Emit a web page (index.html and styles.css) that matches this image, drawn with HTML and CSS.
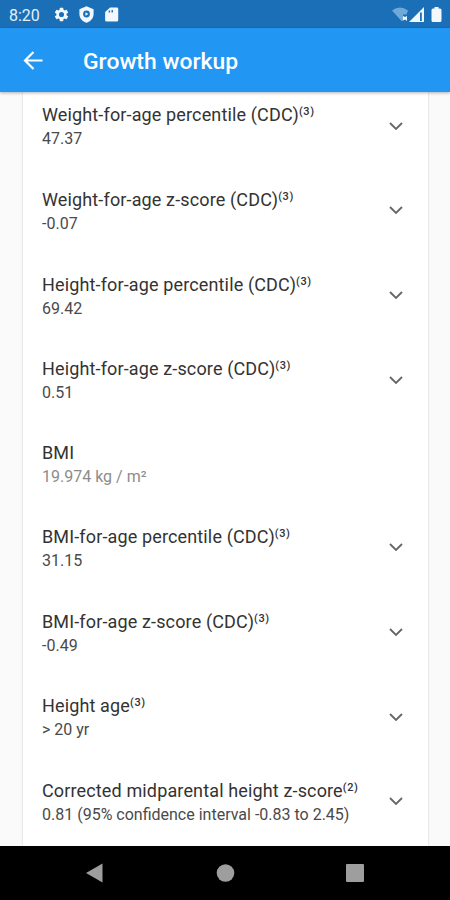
FILE: index.html
```
<!DOCTYPE html>
<html lang="en">
<head>
  <meta charset="UTF-8" />
  <meta name="viewport" content="width=device-width, initial-scale=1.0"/>
  <title>Growth workup</title>
  <link rel="stylesheet" href="styles.css">
</head>
<body>
  <div class="status-bar">
    <span class="clock">8:20</span>
    <svg class="status-icon gear" viewBox="0 0 24 24"><path d="M19.14 12.94c.04-.3.06-.61.06-.94s-.02-.64-.07-.94l2.03-1.58a.49.49 0 0 0 .12-.61l-1.92-3.32a.49.49 0 0 0-.59-.22l-2.39.96c-.5-.38-1.03-.7-1.62-.94L14.4 2.81a.48.48 0 0 0-.48-.41h-3.84a.47.47 0 0 0-.47.41l-.36 2.54c-.59.24-1.13.57-1.62.94l-2.39-.96a.48.48 0 0 0-.59.22L2.74 8.87a.47.47 0 0 0 .12.61l2.03 1.58c-.05.3-.09.63-.09.94s.02.64.07.94l-2.03 1.58a.49.49 0 0 0-.12.61l1.92 3.32c.12.22.37.29.59.22l2.39-.96c.5.38 1.03.7 1.62.94l.36 2.54c.05.24.24.41.48.41h3.84c.24 0 .44-.17.47-.41l.36-2.54c.59-.24 1.13-.56 1.62-.94l2.39.96c.22.08.47 0 .59-.22l1.92-3.32a.47.47 0 0 0-.12-.61zM12 15.6a3.6 3.6 0 1 1 0-7.2 3.6 3.6 0 0 1 0 7.2z"/></svg>
    <svg class="status-icon shield" viewBox="0 0 24 24"><path fill-rule="evenodd" d="M12 .5 2 4.500v7c0 5.550 4.500 10.500 10 12 5.500-1.500 10-6.450 10-12v-7zM12 6.500a4.800 4.800 0 1 1 0 9.600 4.800 4.800 0 0 1 0-9.600zM10.500 8.800v5l4.200-2.500z"/></svg>
    <svg class="status-icon card-icon" viewBox="0 0 24 24"><path d="M19.500 2H10L3 8.500V20a2 2 0 0 0 2 2h14.500a2 2 0 0 0 2-2V4a2 2 0 0 0-2-2zM10 9H8V6.500h2zm4 0h-2V5.500h2z"/></svg>
    <span class="spacer"></span>
    <svg class="signal-icons" viewBox="0 0 52 18">
      <path class="dim" d="M0 4.500Q8-1.500 16 4.500L14.500 8.500H11v6.500H9.500z"/>
      <path d="M11 10l2 1 2-1v5l-2-1.500-2 1z"/>
      <path d="M32 1v15H17zM28 6.500v8.500h1.800V6.500z" fill-rule="evenodd"/>
      <path d="M42.500 1h4v1.500h1.500q1.500 0 1.500 1.500V14.500q0 1.500-1.500 1.500h-7q-1.500 0-1.500-1.500V4q0-1.500 1.500-1.500h1.500z"/>
    </svg>
  </div>

  <header class="app-bar">
    <svg class="back" viewBox="0 0 24 24"><path d="M21.500 11.500H4M12.500 3l-8.500 8.500 8.500 8.500"/></svg>
    <h1>Growth workup</h1>
  </header>

  <main>
    <div class="results">
      <div class="result">
        <div>
          <div class="name">Weight-for-age percentile (CDC)<sup>(3)</sup></div>
          <div class="value">47.37</div>
        </div>
        <svg class="chevron" viewBox="0 0 14 8"><path d="M1 1l6 6 6-6"/></svg>
      </div>
      <div class="result">
        <div>
          <div class="name">Weight-for-age z-score (CDC)<sup>(3)</sup></div>
          <div class="value">-0.07</div>
        </div>
        <svg class="chevron" viewBox="0 0 14 8"><path d="M1 1l6 6 6-6"/></svg>
      </div>
      <div class="result">
        <div>
          <div class="name">Height-for-age percentile (CDC)<sup>(3)</sup></div>
          <div class="value">69.42</div>
        </div>
        <svg class="chevron" viewBox="0 0 14 8"><path d="M1 1l6 6 6-6"/></svg>
      </div>
      <div class="result">
        <div>
          <div class="name">Height-for-age z-score (CDC)<sup>(3)</sup></div>
          <div class="value">0.51</div>
        </div>
        <svg class="chevron" viewBox="0 0 14 8"><path d="M1 1l6 6 6-6"/></svg>
      </div>
      <div class="result plain">
        <div>
          <div class="name">BMI</div>
          <div class="value">19.974 kg / m²</div>
        </div>
      </div>
      <div class="result">
        <div>
          <div class="name">BMI-for-age percentile (CDC)<sup>(3)</sup></div>
          <div class="value">31.15</div>
        </div>
        <svg class="chevron" viewBox="0 0 14 8"><path d="M1 1l6 6 6-6"/></svg>
      </div>
      <div class="result">
        <div>
          <div class="name">BMI-for-age z-score (CDC)<sup>(3)</sup></div>
          <div class="value">-0.49</div>
        </div>
        <svg class="chevron" viewBox="0 0 14 8"><path d="M1 1l6 6 6-6"/></svg>
      </div>
      <div class="result">
        <div>
          <div class="name">Height age<sup>(3)</sup></div>
          <div class="value">&gt; 20 yr</div>
        </div>
        <svg class="chevron" viewBox="0 0 14 8"><path d="M1 1l6 6 6-6"/></svg>
      </div>
      <div class="result">
        <div>
          <div class="name">Corrected midparental height z-score<sup>(2)</sup></div>
          <div class="value">0.81 (95% confidence interval -0.83 to 2.45)</div>
        </div>
        <svg class="chevron" viewBox="0 0 14 8"><path d="M1 1l6 6 6-6"/></svg>
      </div>
    </div>
  </main>

  <nav class="nav-bar">
    <svg viewBox="0 0 20 20"><path d="M1 10 17.500 .5v19z"/></svg>
    <svg viewBox="0 0 20 20"><circle cx="10.500" cy="10" r="8.800"/></svg>
    <svg viewBox="0 0 20 20"><rect x="1" y="1" width="18" height="18" rx="1"/></svg>
  </nav>
</body>
</html>
```

FILE: styles.css
```
* {
  box-sizing: border-box;
}

body {
  margin: 0;
  height: 900px;
  display: flex;
  flex-direction: column;
  overflow: hidden;
  font-family: Roboto, sans-serif;
  background-color: #fafafa;
}

.status-bar {
  height: 28px;
  flex: none;
  display: flex;
  align-items: center;
  padding: 2px 6px 0 9px;
  background-color: #1a6fb7;
  color: #e3effa;
}

.clock {
  width: 44px;
  font-size: 16px;
}

.status-icon {
  width: 17px;
  height: 17px;
  margin-top: -1px;
  fill: #f2f8fd;
}

.shield {
  margin-left: 8px;
}

.card-icon {
  margin-left: 8px;
}

.spacer {
  flex: 1;
}

.signal-icons {
  width: 52px;
  height: 18px;
  margin-top: -1px;
  fill: #f2f8fd;
}

.signal-icons .dim {
  fill: #70a8d7;
}

.app-bar {
  height: 64px;
  flex: none;
  display: flex;
  align-items: center;
  gap: 38px;
  padding: 1px 21px 0;
  background-color: #2196f3;
  color: white;
  box-shadow: 0 1px 3px rgba(0,0,0,0.3);
  z-index: 1;
}

.back {
  width: 24px;
  height: 24px;
  fill: none;
  stroke: white;
  stroke-width: 2.2;
}

h1 {
  margin: 1px 0 0;
  font-size: 22.9px;
  font-weight: 500;
}

main {
  flex: 1;
  min-height: 0;
  overflow: hidden;
  padding: 0 22px 0 23px;
}

.results {
  height: 100%;
  padding: 11.4px 25.5px 0 19px;
  background-color: white;
  box-shadow: 0 0 2px rgba(0,0,0,0.2);
}

.result {
  height: 84.7px;
  display: flex;
  justify-content: space-between;
}

.plain {
  height: 82.2px;
  margin-top: -1px;
  margin-bottom: 1.6px;
}

.name {
  height: 24px;
  line-height: 24px;
  font-size: 18px;
  letter-spacing: 0.14px;
  color: #333;
  white-space: nowrap;
}

.name sup {
  font-size: 11px;
  font-weight: 500;
  line-height: 0;
  letter-spacing: 0.6px;
  vertical-align: 6px;
}

.value {
  height: 24px;
  line-height: 24px;
  font-size: 16px;
  color: #4a4a4a;
  white-space: nowrap;
}

.plain .value {
  color: #8c8c8c;
}

.chevron {
  width: 14px;
  height: 8px;
  margin-top: 18.3px;
  fill: none;
  stroke: #666;
  stroke-width: 1.8;
}

.nav-bar {
  height: 54px;
  flex: none;
  display: flex;
  align-items: center;
  justify-content: space-between;
  padding: 0 85px;
  background-color: black;
}

.nav-bar svg {
  width: 20px;
  height: 20px;
  fill: #9e9e9e;
}
```
